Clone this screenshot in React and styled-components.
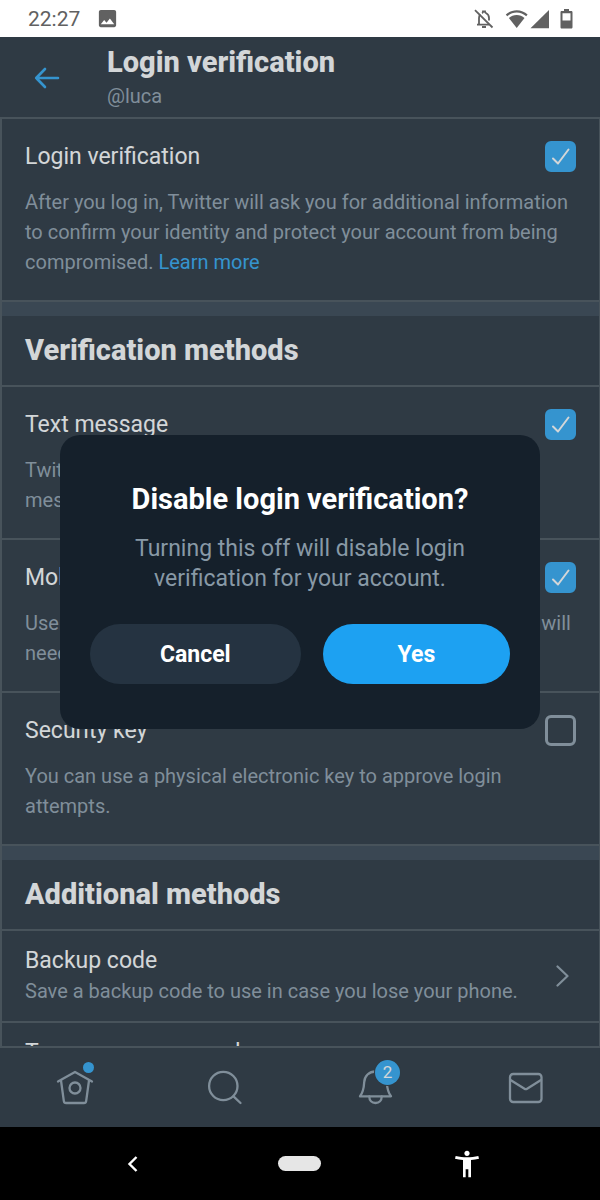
import React, { useState } from "react";
import styled, { createGlobalStyle } from "styled-components";
import { MdAccessibilityNew, MdImage } from "react-icons/md";

const App = () => {
    const [open, setOpen] = useState(true);
    const [methods, setMethods] = useState({ login: true, text: true, app: true, key: false });

    const toggle = (name) => {
        if (name === "login" && methods.login) {
            setOpen(true);
            return;
        }
        setMethods({ ...methods, [name]: !methods[name] });
    };

    const disable = () => {
        setMethods({ ...methods, login: false });
        setOpen(false);
    };

    return (
        <Phone>
            <GlobalStyle />
            <StatusBar />
            <Screen>
                <Header>
                    <BackButton type="button" aria-label="Back">
                        <BackIcon />
                    </BackButton>
                    <div>
                        <PageTitle>Login verification</PageTitle>
                        <Handle>@luca</Handle>
                    </div>
                </Header>
                <Content>
                    <Option id="login" title="Login verification" checked={methods.login} onToggle={toggle}>
                        After you log in, Twitter will ask you for additional information to confirm your
                        identity and protect your account from being compromised. <Link href="#learn">Learn more</Link>
                    </Option>
                    <Band />
                    <SectionTitle>Verification methods</SectionTitle>
                    <Option id="text" title="Text message" checked={methods.text} onToggle={toggle}>
                        Twitter will send a login code to your phone with a text message each time.
                    </Option>
                    <Option id="app" title="Mobile security app" checked={methods.app} onToggle={toggle}>
                        Use a mobile security app to generate the login codes you will need when you log in.
                    </Option>
                    <Option id="key" title="Security key" checked={methods.key} onToggle={toggle}>
                        You can use a physical electronic key to approve login attempts.
                    </Option>
                    <Band />
                    <SectionTitle>Additional methods</SectionTitle>
                    <LinkRow href="#backup">
                        <div>
                            <RowTitle>Backup code</RowTitle>
                            <RowText>Save a backup code to use in case you lose your phone.</RowText>
                        </div>
                        <Chevron />
                    </LinkRow>
                    <LinkRow href="#temporary">
                        <RowTitle>Temporary password</RowTitle>
                    </LinkRow>
                </Content>
                <TabBar />
                {open && (
                    <Backdrop>
                        <Dialog role="dialog" aria-modal="true" aria-labelledby="dialog-title">
                            <DialogTitle id="dialog-title">Disable login verification?</DialogTitle>
                            <DialogText>Turning this off will disable login verification for your account.</DialogText>
                            <Buttons>
                                <DialogButton type="button" $grow={9} onClick={() => setOpen(false)}>Cancel</DialogButton>
                                <DialogButton type="button" $grow={8} $primary onClick={disable}>Yes</DialogButton>
                            </Buttons>
                        </Dialog>
                    </Backdrop>
                )}
            </Screen>
            <SystemBar>
                <SystemButton type="button" aria-label="System back">
                    <svg width="24" height="24" viewBox="0 0 24 24" fill="none" stroke="#fff" strokeWidth="2.4">
                        <path d="M15.5 5 8.5 12l7 7" />
                    </svg>
                </SystemButton>
                <SystemButton type="button" aria-label="Home screen"><Pill /></SystemButton>
                <SystemButton type="button" aria-label="Accessibility"><MdAccessibilityNew size="32" /></SystemButton>
            </SystemBar>
        </Phone>
    );
};

const StatusBar = () => (
    <Status>
        <Time>22:27</Time>
        <MdImage size="23" />
        <StatusIcons>
            <svg width="20" height="20" viewBox="0 0 20 20" fill="none" stroke="#616161" strokeWidth="1.8">
                <path d="M1 1.2 18.5 18.5" />
                <path d="M5 15.5V9c0-1.5.4-2.6 1.2-3.6M3 15.6h12M8 4.2C8.7 3.9 9 3.5 9 2.5h2c0 1 .3 1.4 1.2 1.8C14 5.2 15 7 15 9v2.5" />
                <path d="M8 18h4" strokeWidth="2" />
            </svg>
            <svg width="44" height="20" viewBox="0 0 44 20" fill="#616161">
                <path d="M.8 5.5C3.6 3 7.5 1.2 11.7 1.2S19.8 3 22.6 5.5l-1.4 1.8C18.5 4.9 15.3 3.5 11.7 3.5S4.9 4.9 2.2 7.3z" />
                <path d="M3.9 9C6 7 8.7 5.9 11.7 5.9S17.4 7 19.5 9l-7.8 10z" />
                <path d="M44 1v18.3H25.5z" />
            </svg>
            <svg width="13" height="20" viewBox="0 0 13 20" fill="#616161">
                <path fillRule="evenodd" d="M4 0h5v2h2.3c.6 0 1.2.5 1.2 1.2v15c0 .7-.6 1.3-1.2 1.3H1.7c-.7 0-1.2-.6-1.2-1.3v-15C.5 2.5 1 2 1.7 2H4zM2.5 4.2v7.3h8V4.2z" />
            </svg>
        </StatusIcons>
    </Status>
);

const Option = ({ id, title, checked, onToggle, children }) => (
    <OptionRow>
        <OptionHead>
            <OptionLabel htmlFor={id}>{title}</OptionLabel>
            <Check>
                <CheckInput type="checkbox" id={id} checked={checked} onChange={() => onToggle(id)} />
                {checked && (
                    <CheckMark viewBox="0 0 31 31">
                        <path d="M8 17.5l5 5L23.5 8.5" />
                    </CheckMark>
                )}
            </Check>
        </OptionHead>
        <OptionText>{children}</OptionText>
    </OptionRow>
);

const BackIcon = () => (
    <svg width="26" height="24" viewBox="0 0 26 24" fill="none" stroke="#1da1f2" strokeWidth="2.6" strokeLinecap="round" strokeLinejoin="round">
        <path d="M24 12H2.2M11 3 2.2 12l8.8 9" />
    </svg>
);

const Chevron = () => (
    <svg width="14" height="24" viewBox="0 0 14 24" fill="none" stroke="#8899a6" strokeWidth="2.2" strokeLinecap="round" strokeLinejoin="round">
        <path d="M2.5 2.5 12.5 12l-10 9.5" />
    </svg>
);

const TabBar = () => (
    <Tabs>
        <Tab href="#home" aria-label="Home">
            <TabIcon viewBox="0 0 40 40">
                <path d="M3 14.5 20 5l17 9.5M6 13.5l2.8 20.3c.2 1.4 1 2.2 2.3 2.2h17.8c1.3 0 2.1-.8 2.3-2.2L34 13.5" />
                <circle cx="20" cy="21" r="5.5" />
            </TabIcon>
            <Dot />
        </Tab>
        <Tab href="#search" aria-label="Search">
            <TabIcon viewBox="0 0 40 40">
                <circle cx="18.3" cy="19" r="14.2" />
                <path d="M28.5 29.3 35.5 36" />
            </TabIcon>
        </Tab>
        <Tab href="#notifications" aria-label="Notifications">
            <TabIcon viewBox="0 0 40 40">
                <path d="M5 29.3h31c-2.5-3-3.8-7-4.2-14C31.5 9 27 4.5 20.5 4.5S9.5 9 9.2 15.3C8.8 22.3 7.5 26.3 5 29.3z" />
                <path d="M14.3 29.5c0 4 2.5 6.5 6.2 6.5s6.2-2.5 6.2-6.5" />
            </TabIcon>
            <Badge>2</Badge>
        </Tab>
        <Tab href="#messages" aria-label="Messages">
            <TabIcon viewBox="0 0 40 40">
                <rect x="5" y="7" width="31.5" height="28" rx="3.2" />
                <path d="M5.5 13 19.5 21.8q1.3.8 2.6 0L36 13" />
            </TabIcon>
        </Tab>
    </Tabs>
);

const GlobalStyle = createGlobalStyle`
    * {
        box-sizing: border-box;
    }
    body {
        margin: 0;
        font-family: Roboto, "Liberation Sans", sans-serif;
    }
    h1, h2, p {
        margin: 0;
    }
    a {
        text-decoration: none;
    }
    button {
        border: 0;
        padding: 0;
        background: none;
        font-family: inherit;
        cursor: pointer;
    }
    svg {
        display: block;
        flex: none;
    }
`;

const Phone = styled.div`
    display: flex;
    flex-direction: column;
    height: 100vh;
    background-color: #000000;
`;

const Status = styled.div`
    display: flex;
    flex: none;
    align-items: center;
    gap: 16px;
    height: 37px;
    padding: 0 27px 0 28px;
    background-color: #FFFFFF;
    color: #616161;
`;

const Time = styled.span`
    font-size: 21px;
`;

const StatusIcons = styled.div`
    display: flex;
    gap: 11px;
    margin-left: auto;
`;

const Screen = styled.div`
    position: relative;
    display: flex;
    flex-direction: column;
    flex: 1;
    min-height: 0;
    background-color: #15202B;
`;

const Header = styled.header`
    display: flex;
    flex: none;
    align-items: center;
    gap: 47px;
    padding: 9px 32px 3px 34px;
    border-bottom: 2px solid #38444D;
`;

const BackButton = styled.button`
    flex: none;
    padding-bottom: 5px;
`;

const PageTitle = styled.h1`
    font-size: 29px;
    line-height: 32px;
    font-weight: 800;
    color: #FFFFFF;
`;

const Handle = styled.p`
    font-size: 20px;
    line-height: 36px;
    color: #8899A6;
`;

const Content = styled.main`
    flex: 1;
    min-height: 0;
    overflow: hidden;
    border: solid #38444D;
    border-width: 0 1px 0 2px;
`;

const OptionRow = styled.section`
    padding: 22px 23px 23px;
    border-bottom: 2px solid #38444D;
`;

const OptionHead = styled.div`
    display: flex;
    align-items: center;
    justify-content: space-between;
    margin-bottom: 15px;
`;

const OptionLabel = styled.label`
    font-size: 23px;
    line-height: 30px;
    color: #FFFFFF;
`;

const OptionText = styled.p`
    font-size: 20px;
    line-height: 30px;
    color: #8899A6;
`;

const Link = styled.a`
    color: #1DA1F2;
`;

const Check = styled.span`
    display: grid;
`;

const CheckInput = styled.input`
    grid-area: 1 / 1;
    width: 31px;
    height: 31px;
    margin: 0;
    appearance: none;
    border: 3px solid #8899A6;
    border-radius: 6px;

    &:checked {
        border-color: #1DA1F2;
        background-color: #1DA1F2;
    }
`;

const CheckMark = styled.svg`
    grid-area: 1 / 1;
    width: 31px;
    height: 31px;
    pointer-events: none;
    fill: none;
    stroke: #FFFFFF;
    stroke-width: 2;
    stroke-linecap: round;
    stroke-linejoin: round;
`;

const Band = styled.div`
    height: 14px;
    background-color: #253341;
`;

const SectionTitle = styled.h2`
    padding: 16px 23px 17px;
    border-bottom: 2px solid #38444D;
    font-size: 29px;
    line-height: 36px;
    font-weight: 800;
    color: #FFFFFF;
`;

const LinkRow = styled.a`
    display: flex;
    align-items: center;
    justify-content: space-between;
    padding: 15px 30px 15px 23px;
    border-bottom: 2px solid #38444D;
`;

const RowTitle = styled.div`
    font-size: 23px;
    line-height: 30px;
    color: #FFFFFF;
`;

const RowText = styled.div`
    font-size: 20px;
    line-height: 30px;
    color: #8899A6;
`;

const Tabs = styled.nav`
    display: grid;
    flex: none;
    grid-template-columns: repeat(4, 1fr);
    align-items: center;
    justify-items: center;
    height: 81px;
    padding-bottom: 2px;
    border-top: 2px solid #38444D;
`;

const Tab = styled.a`
    position: relative;
`;

const TabIcon = styled.svg`
    width: 40px;
    height: 40px;
    fill: none;
    stroke: #8899A6;
    stroke-width: 2.3;
    stroke-linecap: round;
    stroke-linejoin: round;
`;

const Dot = styled.span`
    position: absolute;
    top: -5px;
    right: 1px;
    width: 11px;
    height: 11px;
    border-radius: 50%;
    background-color: #1DA1F2;
`;

const Badge = styled.span`
    position: absolute;
    top: -7px;
    right: -5px;
    width: 25px;
    height: 25px;
    border-radius: 50%;
    box-shadow: 0 0 0 1px #15202B;
    background-color: #1DA1F2;
    color: #FFFFFF;
    font-size: 17px;
    line-height: 25px;
    text-align: center;
`;

const Backdrop = styled.div`
    position: absolute;
    inset: 0;
    display: flex;
    align-items: center;
    justify-content: center;
    background-color: rgba(110, 118, 125, 0.3);
`;

const Dialog = styled.div`
    width: 80%;
    padding: 46px 30px 45px;
    border-radius: 20px;
    background-color: #15202B;
    text-align: center;
`;

const DialogTitle = styled.h2`
    font-size: 29px;
    line-height: 36px;
    font-weight: 700;
    color: #FFFFFF;
`;

const DialogText = styled.p`
    margin: 17px 0 30px;
    font-size: 23px;
    line-height: 30px;
    color: #8899A6;
`;

const Buttons = styled.div`
    display: flex;
    gap: 22px;
`;

const DialogButton = styled.button`
    flex: ${(props) => props.$grow} 1 0;
    height: 60px;
    border-radius: 30px;
    background-color: ${(props) => (props.$primary ? "#1DA1F2" : "#253341")};
    color: #FFFFFF;
    font-size: 23px;
    font-weight: 700;
`;

const SystemBar = styled.div`
    display: grid;
    flex: none;
    grid-template-columns: repeat(3, 1fr);
    align-items: center;
    justify-items: center;
    height: 73px;
    padding: 0 50px;
`;

const SystemButton = styled.button`
    color: #FFFFFF;
`;

const Pill = styled.span`
    display: block;
    width: 43px;
    height: 15px;
    border-radius: 8px;
    background-color: #E6E6E6;
`;

export default App;
